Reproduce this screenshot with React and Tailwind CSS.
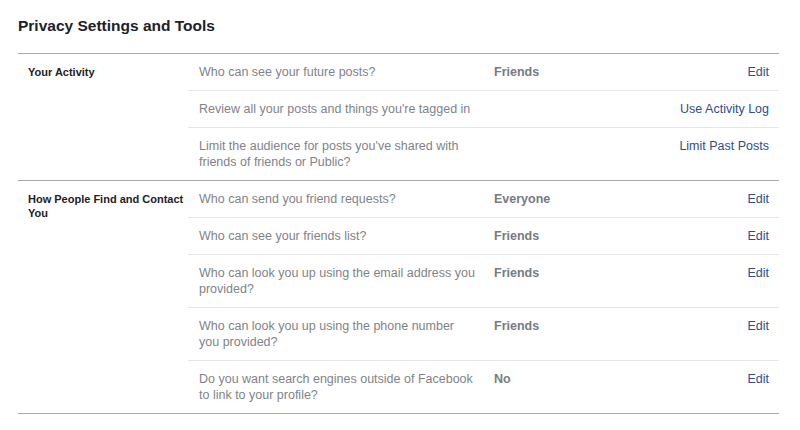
import React from "react";

const sections = [
  {
    label: "Your Activity",
    rows: [
      { q: "Who can see your future posts?", v: "Friends", a: "Edit" },
      { q: "Review all your posts and things you're tagged in", v: "", a: "Use Activity Log" },
      { q: "Limit the audience for posts you've shared with friends of friends or Public?", v: "", a: "Limit Past Posts" },
    ],
  },
  {
    label: "How People Find and Contact You",
    rows: [
      { q: "Who can send you friend requests?", v: "Everyone", a: "Edit" },
      { q: "Who can see your friends list?", v: "Friends", a: "Edit" },
      { q: "Who can look you up using the email address you provided?", v: "Friends", a: "Edit" },
      { q: "Who can look you up using the phone number you provided?", v: "Friends", a: "Edit" },
      { q: "Do you want search engines outside of Facebook to link to your profile?", v: "No", a: "Edit" },
    ],
  },
];

export default function App() {
  return (
    <div
      className="w-[800px] h-[430px] bg-white px-[18px] overflow-hidden"
      style={{ fontFamily: '"Liberation Sans", Arial, sans-serif' }}
    >
      <h1 className="pt-[16px] pb-[17px] text-[15.5px] leading-[20px] font-bold text-[#1d2129]">
        Privacy Settings and Tools
      </h1>
      <div className="w-[761px] border-t border-[#a9abaf]">
        {sections.map((s) => (
          <div key={s.label} className="flex border-b border-[#a9abaf]">
            <div className="w-[170px] shrink-0 pl-[10px] pt-[11px] text-[11px] leading-[14px] font-bold text-[#1d2129]">
              {s.label}
            </div>
            <div className="flex-1">
              {s.rows.map((r, i) => (
                <div
                  key={i}
                  className={
                    "flex pl-[11px] pr-[10px] py-[10px] text-[12.5px] leading-[16px] " +
                    (i < s.rows.length - 1 ? "border-b border-[#e5e6e9]" : "")
                  }
                >
                  <div className="w-[295px] shrink-0 pr-[18px] text-[#7f8389]">{r.q}</div>
                  <div className="flex-1 font-bold text-[#777b82]">{r.v}</div>
                  <div className="text-[#2f4d8a] text-right">{r.a}</div>
                </div>
              ))}
            </div>
          </div>
        ))}
      </div>
    </div>
  );
}
